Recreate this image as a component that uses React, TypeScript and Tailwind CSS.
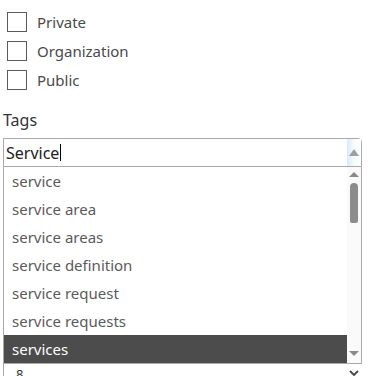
import React from "react";

const items = [
  "service",
  "service area",
  "service areas",
  "service definition",
  "service request",
  "service requests",
  "services",
];

function Box({ label }: { label: string }) {
  return (
    <div className="flex items-center h-[20px]">
      <div className="w-[20px] h-[20px] border-[1.5px] border-[#5a5a5a] bg-white" />
      <span className="ml-[10px] text-[15px] text-[#4a4a4a] leading-none">{label}</span>
    </div>
  );
}

export default function App() {
  return (
    <div
      className="w-[368px] h-[376px] overflow-hidden bg-white"
      style={{ fontFamily: "'Noto Sans', 'Open Sans', sans-serif" }}
    >
      <div className="pt-[12px] pl-[7px] flex flex-col gap-[9px]">
        <Box label="Private" />
        <Box label="Organization" />
        <Box label="Public" />
      </div>
      <div className="mt-[20px] pl-[3px] text-[16px] leading-[20px] text-[#333]">Tags</div>
      <div className="mt-[8px] ml-[3px] w-[359px]">
        <div className="h-[29px] border border-[#a9a9a9] rounded-tr-[4px] flex items-center bg-white">
          <span className="pl-[2px] text-[16px] text-[#222] leading-none">Service</span>
          <span className="w-px h-[17px] bg-black ml-[1px]" />
          <div className="ml-auto h-full w-[14px] bg-gradient-to-r from-[#d6ebf8] via-[#f6fbfe] to-white flex items-center justify-center">
            <div className="w-0 h-0 border-l-[5px] border-r-[5px] border-b-[7px] border-l-transparent border-r-transparent border-b-[#a0a0a0]" />
          </div>
        </div>
        <div className="border-x border-b border-[#a9a9a9] flex">
          <div className="flex-1 flex flex-col">
            {items.map((t, i) => (
              <div
                key={t}
                className={
                  i === items.length - 1
                    ? "h-[28px] flex items-center pl-[8px] text-[15px] text-white bg-[#4c4c4c]"
                    : "h-[28px] flex items-center pl-[8px] text-[15px] text-[#5a5a5a]"
                }
              >
                {t}
              </div>
            ))}
          </div>
          <div className="w-[14px] bg-[#fafafa] flex flex-col items-center">
            <div className="mt-[5px] w-0 h-0 border-l-[5px] border-r-[5px] border-b-[5px] border-l-transparent border-r-transparent border-b-[#8a8a8a]" />
            <div className="mt-[6px] w-[8px] h-[40px] rounded-t-[4px] rounded-b-[2px] bg-[#8c8c8c]" />
            <div className="mt-auto mb-[7px] w-0 h-0 border-l-[5px] border-r-[5px] border-t-[5px] border-l-transparent border-r-transparent border-t-[#8a8a8a]" />
          </div>
        </div>
        <div className="h-[14px] border-l border-[#a9a9a9] flex items-start">
          <span className="pl-[12px] text-[13px] leading-[14px] mt-[3px] text-[#333]">8</span>
          <svg className="ml-auto mr-[3px] mt-[6px]" width="10" height="6" viewBox="0 0 10 6">
            <path d="M1 1 L5 5 L9 1" stroke="#444" strokeWidth="1.8" fill="none" />
          </svg>
        </div>
      </div>
    </div>
  );
}
